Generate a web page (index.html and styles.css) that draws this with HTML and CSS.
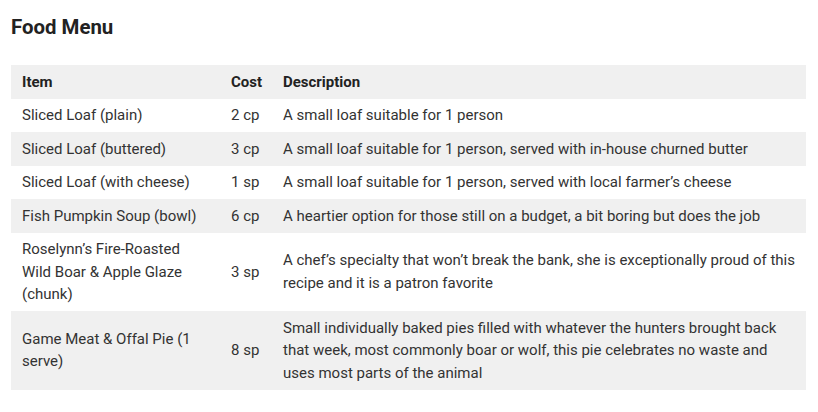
FILE: index.html
```html
<!DOCTYPE html>
<html>
<head>
<meta charset="utf-8">
<link rel="stylesheet" href="styles.css">
</head>
<body>
<div class="page">
  <h2 class="title">Food Menu</h2>
  <table class="menu">
    <colgroup>
      <col class="c-item">
      <col class="c-cost">
      <col class="c-desc">
    </colgroup>
    <thead>
      <tr><th>Item</th><th>Cost</th><th>Description</th></tr>
    </thead>
    <tbody>
      <tr><td>Sliced Loaf (plain)</td><td>2 cp</td><td>A small loaf suitable for 1 person</td></tr>
      <tr><td>Sliced Loaf (buttered)</td><td>3 cp</td><td>A small loaf suitable for 1 person, served with in-house churned butter</td></tr>
      <tr><td>Sliced Loaf (with cheese)</td><td>1 sp</td><td>A small loaf suitable for 1 person, served with local farmer’s cheese</td></tr>
      <tr><td>Fish Pumpkin Soup (bowl)</td><td>6 cp</td><td>A heartier option for those still on a budget, a bit boring but does the job</td></tr>
      <tr><td>Roselynn’s Fire-Roasted Wild Boar &amp; Apple Glaze (chunk)</td><td>3 sp</td><td>A chef’s specialty that won’t break the bank, she is exceptionally proud of this recipe and it is a patron favorite</td></tr>
      <tr><td>Game Meat &amp; Offal Pie (1 serve)</td><td>8 sp</td><td>Small individually baked pies filled with whatever the hunters brought back that week, most commonly boar or wolf, this pie celebrates no waste and uses most parts of the animal</td></tr>
    </tbody>
  </table>
</div>
</body>
</html>
```

FILE: styles.css
```css
html, body {
  margin: 0;
  padding: 0;
  background: #ffffff;
}
.page {
  padding: 0 12px 0 11px;
  font-family: Roboto, "Liberation Sans", sans-serif;
  color: #333333;
}
.title {
  margin: 0;
  padding-top: 14px;
  font-size: 20.4px;
  line-height: 26px;
  font-weight: 700;
  color: #222222;
  height: 51px;
}
.menu {
  width: 795px;
  border-collapse: collapse;
  table-layout: fixed;
  font-size: 15px;
  line-height: 22.5px;
}
.c-item { width: 209px; }
.c-cost { width: 52px; }
.c-desc { width: auto; }
.menu th,
.menu td {
  padding: 5.5px 11px;
  text-align: left;
  vertical-align: middle;
}
.menu th {
  font-weight: 700;
  color: #222222;
}
.menu thead tr {
  background: #f0f0f0;
}
.menu tbody tr:nth-child(even) {
  background: #f0f0f0;
}
```
